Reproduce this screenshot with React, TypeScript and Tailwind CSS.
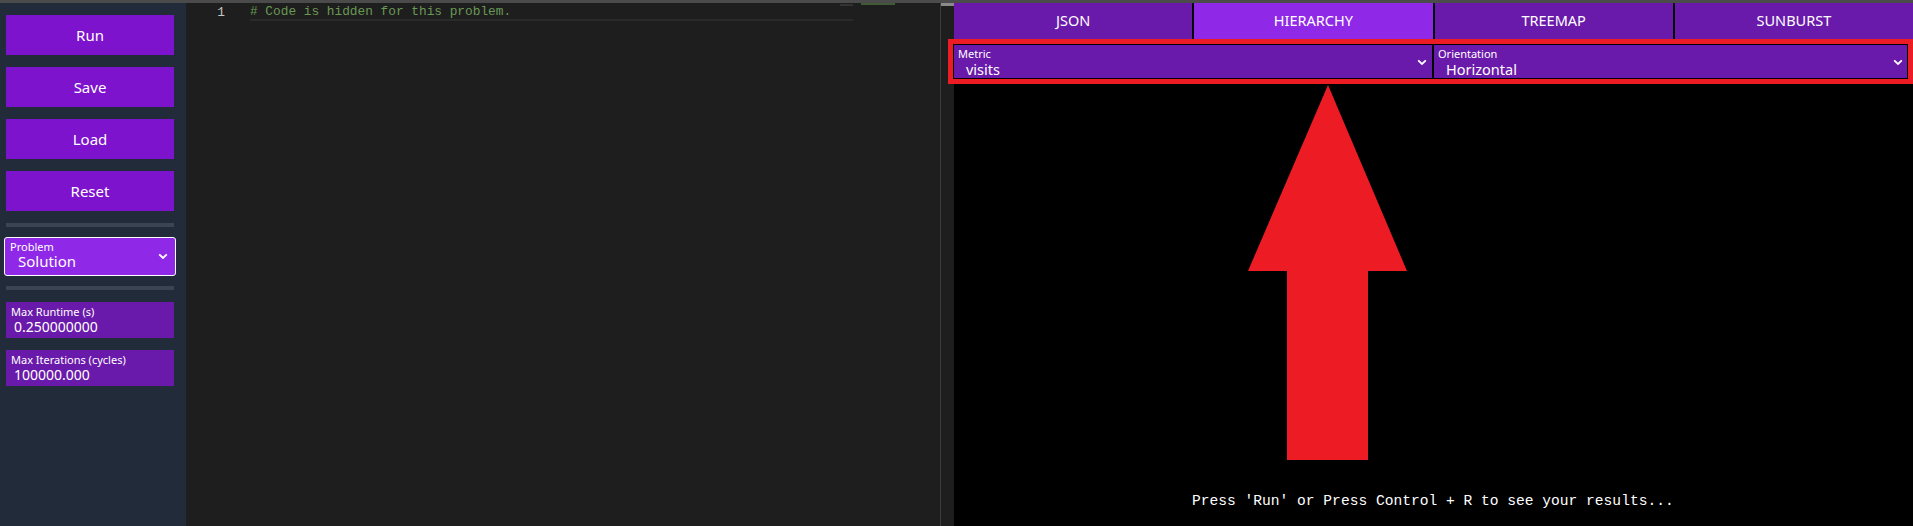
import React from "react";

const ui = { fontFamily: '"Noto Sans", "Open Sans", sans-serif' };
const mono = { fontFamily: '"Liberation Mono", "DejaVu Sans Mono", monospace' };

const Chevron: React.FC<{ className?: string }> = ({ className }) => (
  <svg width="10" height="7" viewBox="0 0 10 7" className={className}>
    <path d="M1.2 1.3 L5 5 L8.8 1.3" stroke="white" strokeWidth="1.8" fill="none" />
  </svg>
);

const SideButton: React.FC<{ label: string }> = ({ label }) => (
  <button className="h-10 w-[168px] bg-[#7d13cd] text-white text-[15px]" style={ui}>
    {label}
  </button>
);

const Field: React.FC<{ label: string; value: string }> = ({ label, value }) => (
  <div className="h-9 w-[168px] bg-[#6a1aaa] px-[5px] text-white leading-none" style={ui}>
    <div className="text-[11px] pt-[4px]">{label}</div>
    <div className="text-[14px] pl-[3px] pt-[3px]">{value}</div>
  </div>
);

const SelectBox: React.FC<{ label: string; value: string; className?: string }> = ({
  label,
  value,
  className,
}) => (
  <div className={`relative h-[34px] bg-[#6a1aaa] text-white leading-none ${className ?? ""}`} style={ui}>
    <div className="text-[11px] pl-[4px] pt-[3px]">{label}</div>
    <div className="text-[14.5px] pl-[12px] pt-[3px]">{value}</div>
    <Chevron className="absolute right-[5px] top-[14px]" />
  </div>
);

const tabs = ["JSON", "HIERARCHY", "TREEMAP", "SUNBURST"];

export default function App() {
  return (
    <div className="h-[526px] w-full flex flex-col bg-[#1e1e1e] overflow-hidden">
      <div className="h-[3px] bg-[#4b4b4b] shrink-0" />
      <div className="flex flex-1 min-h-0">
        {/* sidebar */}
        <aside className="w-[186px] shrink-0 bg-[#212b39] flex flex-col pl-[6px] pt-[12px]">
          <div className="flex flex-col gap-3">
            <SideButton label="Run" />
            <SideButton label="Save" />
            <SideButton label="Load" />
            <SideButton label="Reset" />
          </div>
          <div className="mt-3 h-1 w-[168px] bg-[#3b4452]" />
          <div
            className="relative -ml-[2px] mt-[10px] h-[39px] w-[172px] rounded-[3px] border border-white bg-[#9028e8] text-white leading-none"
            style={ui}
          >
            <div className="text-[11px] pl-[5px] pt-[3px]">Problem</div>
            <div className="text-[15px] pl-[13px] pt-[2px]">Solution</div>
            <Chevron className="absolute right-[7px] top-[15px]" />
          </div>
          <div className="mt-[10px] h-1 w-[168px] bg-[#3b4452]" />
          <div className="mt-3 flex flex-col gap-3">
            <Field label="Max Runtime (s)" value="0.250000000" />
            <Field label="Max Iterations (cycles)" value="100000.000" />
          </div>
        </aside>

        {/* editor */}
        <section className="relative w-[754px] shrink-0 bg-[#1e1e1e]">
          <div className="flex items-center h-[16px] mt-[2px]">
            <span className="w-[64px] text-right text-[12.8px] text-[#c6c6c6] pr-[25px]" style={mono}>
              1
            </span>
            <div
              className="h-[16px] w-[603px] border-b-2 border-[#2a2a2a] text-[12.8px] text-[#6a9955] leading-[14px]"
              style={mono}
            >
              # Code is hidden for this problem.
            </div>
          </div>
          <div className="absolute left-[675px] top-0 h-[2px] w-[34px] bg-[#3f5a35]" />
          <div className="absolute left-[654px] top-[1px] h-[2px] w-[13px] bg-[#333333]" />
        </section>
        <div className="w-px shrink-0 bg-[#3c3c3c]" />
        <div className="w-[13px] shrink-0 bg-[#1e1e1e]">
          <div className="h-[3px] bg-[#8a8a8a]" />
        </div>

        {/* output panel */}
        <section className="relative flex-1 bg-black flex flex-col">
          <div className="flex gap-[2px] h-9">
            {tabs.map((t) => (
              <div
                key={t}
                className={`flex-1 flex items-center justify-center text-[14.5px] text-white ${
                  t === "HIERARCHY" ? "bg-[#9028e8]" : "bg-[#6a1aaa]"
                }`}
                style={ui}
              >
                {t}
              </div>
            ))}
          </div>
          <div className="mt-[6px] flex gap-[2px] pr-[5px]">
            <SelectBox label="Metric" value="visits" className="w-[478px]" />
            <SelectBox label="Orientation" value="Horizontal" className="flex-1" />
          </div>
          <div className="flex-1 flex items-end pl-[238px] pb-[13px]">
            <span className="text-[14.6px] text-white" style={mono}>
              Press 'Run' or Press Control + R to see your results...
            </span>
          </div>

          {/* annotation: red outline */}
          <div className="absolute left-[-6px] top-9 h-[45px] right-0 border-[5px] border-[#ed1c24]">
            <div className="absolute inset-0 border border-black" />
          </div>
          {/* annotation: arrow */}
          <svg
            className="absolute left-[294px] top-[82px]"
            width="160"
            height="376"
            viewBox="0 0 160 376"
          >
            <polygon
              points="80,0 159,186 120,186 120,375 39,375 39,186 0,186"
              fill="#ed1c24"
            />
          </svg>
        </section>
      </div>
    </div>
  );
}
